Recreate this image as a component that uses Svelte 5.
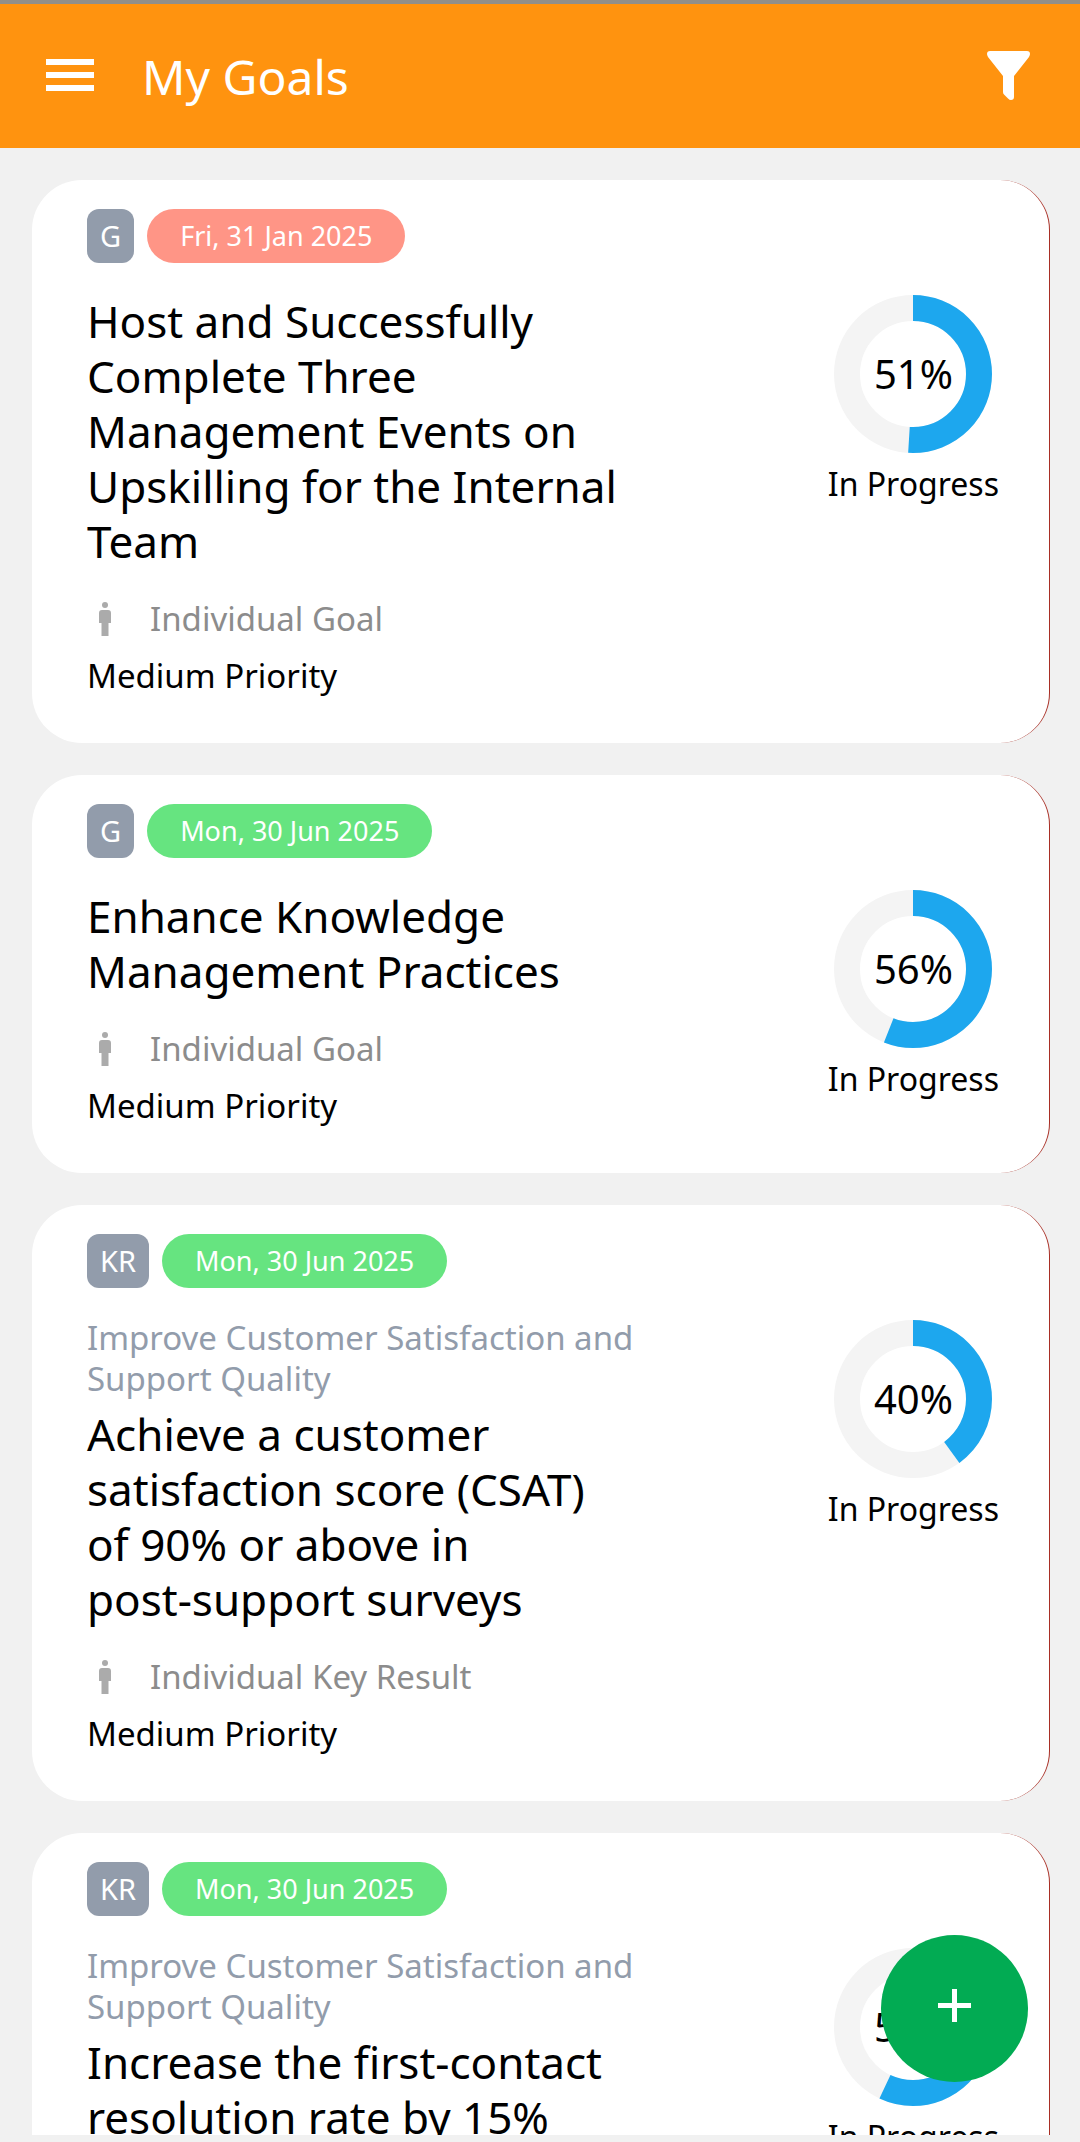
<script>
  let goals = [
    {
      id: 1,
      type: 'G',
      due: 'Fri, 31 Jan 2025',
      overdue: true,
      title: 'Host and Successfully\nComplete Three\nManagement Events on\nUpskilling for the Internal\nTeam',
      kind: 'Individual Goal',
      priority: 'Medium Priority',
      progress: 51,
      status: 'In Progress'
    },
    {
      id: 2,
      type: 'G',
      due: 'Mon, 30 Jun 2025',
      title: 'Enhance Knowledge\nManagement Practices',
      kind: 'Individual Goal',
      priority: 'Medium Priority',
      progress: 56,
      status: 'In Progress'
    },
    {
      id: 3,
      type: 'KR',
      due: 'Mon, 30 Jun 2025',
      parent: 'Improve Customer Satisfaction and\nSupport Quality',
      title: 'Achieve a customer\nsatisfaction score (CSAT)\nof 90% or above in\npost-support surveys',
      kind: 'Individual Key Result',
      priority: 'Medium Priority',
      progress: 40,
      status: 'In Progress'
    },
    {
      id: 4,
      type: 'KR',
      due: 'Mon, 30 Jun 2025',
      parent: 'Improve Customer Satisfaction and\nSupport Quality',
      title: 'Increase the first-contact\nresolution rate by 15%',
      kind: 'Individual Key Result',
      priority: 'Medium Priority',
      progress: 57,
      status: 'In Progress'
    }
  ];
</script>

<div class="screen">
  <header class="topbar">
    <button class="icon-btn" aria-label="Menu">
      <svg width="48" height="32" viewBox="0 0 48 32">
        <path d="M0 0h48v6H0zM0 13h48v6H0zM0 26h48v6H0z" fill="#fff" />
      </svg>
    </button>
    <h1>My Goals</h1>
    <button class="icon-btn filter" aria-label="Filter">
      <svg width="43" height="49" viewBox="0 0 43 49">
        <path
          d="M3 0h37q3 0 3 3 0 1-1 3L27 25v21q0 3-3 3-1.500 0-3-1.500l-4-4q-1-1-1-2.500V25L1 6Q0 4 0 3q0-3 3-3z"
          fill="#fff"
        />
      </svg>
    </button>
  </header>

  <main class="list">
    {#each goals as goal (goal.id)}
      <article class="card">
        <div class="info">
          <div class="chips">
            <span class="type">{goal.type}</span>
            <span class="due" class:overdue={goal.overdue}>{goal.due}</span>
          </div>
          {#if goal.parent}
            <p class="parent">{goal.parent}</p>
          {/if}
          <h2 class:child={goal.parent}>{goal.title}</h2>
          <p class="kind">
            <svg width="12" height="34" viewBox="0 0 12 34">
              <circle cx="6" cy="3" r="3" fill="#ababab" />
              <path d="M3 8h6q3 0 3 3v10H9.500v13h-7V21H0V11q0-3 3-3z" fill="#ababab" />
            </svg>
            {goal.kind}
          </p>
          <p class="priority">{goal.priority}</p>
        </div>
        <div class="progress">
          <div class="ring">
            <svg viewBox="0 0 158 158">
              <circle cx="79" cy="79" r="66" />
              <circle
                class="done"
                cx="79"
                cy="79"
                r="66"
                pathLength="100"
                stroke-dasharray="{goal.progress} 100"
                transform="rotate(-90 79 79)"
              />
            </svg>
            <span>{goal.progress}%</span>
          </div>
          <p>{goal.status}</p>
        </div>
      </article>
    {/each}
  </main>

  <button class="fab" aria-label="Add goal">
    <svg width="33" height="33" viewBox="0 0 33 33">
      <path d="M14 0h5v14h14v5H19v14h-5V19H0v-5h14z" fill="#fff" />
    </svg>
  </button>
</div>

<style>
  :global(body) {
    background: #f1f1f1;
  }
  .screen {
    height: 100vh;
    box-sizing: border-box;
    padding-bottom: 7px;
    display: flex;
    flex-direction: column;
    font-family: 'Noto Sans', Roboto, sans-serif;
    color: #000;
  }
  h1, h2, p {
    margin: 0;
    font-weight: 400;
  }
  button {
    border: none;
    padding: 0;
    cursor: pointer;
  }
  .topbar {
    flex: none;
    height: 148px;
    box-sizing: border-box;
    display: flex;
    align-items: center;
    padding: 0 50px 2px 46px;
    border-top: 4px solid #918f8a;
    background: #ff930f;
    color: #fff;
  }
  .icon-btn {
    display: flex;
    background: none;
  }
  .filter {
    margin-left: auto;
  }
  h1 {
    margin-left: 48px;
    padding-top: 4px;
    font-size: 48px;
    line-height: 64px;
  }
  .list {
    flex: 1;
    min-height: 0;
    overflow-y: auto;
    scrollbar-width: none;
    display: flex;
    flex-direction: column;
    gap: 32px;
    padding: 32px 30px 0 32px;
  }
  .card {
    flex: none;
    display: flex;
    justify-content: space-between;
    padding: 29px 50px 38px 55px;
    background: #fff;
    border-right: 1px solid #a82e24;
    border-radius: 50px;
  }
  .chips {
    display: flex;
    gap: 13px;
    line-height: 54px;
    color: #fff;
  }
  .type {
    padding: 0 13px;
    border-radius: 12px;
    background: #929cab;
    font-size: 29px;
  }
  .due {
    padding: 0 33px;
    border-radius: 27px;
    background: #66e480;
    font-size: 27px;
  }
  .due.overdue {
    background: #ff9586;
  }
  .parent {
    margin-top: 29px;
    font-size: 33px;
    line-height: 41px;
    color: #929cab;
    white-space: pre-line;
  }
  h2 {
    margin-top: 31px;
    font-size: 44px;
    line-height: 55px;
    white-space: pre-line;
  }
  h2.child {
    margin-top: 8px;
  }
  .kind {
    display: flex;
    align-items: center;
    gap: 39px;
    margin-top: 22px;
    padding-left: 12px;
    font-size: 33px;
    line-height: 56px;
    color: #8c8c8c;
  }
  .priority {
    font-size: 33px;
    line-height: 58px;
  }
  .progress {
    padding-top: 86px;
    text-align: center;
    font-size: 32px;
    line-height: 56px;
  }
  .ring {
    display: grid;
    place-items: center;
    width: 158px;
    margin: 0 auto 3px;
  }
  .ring svg,
  .ring span {
    grid-area: 1 / 1;
  }
  .ring svg {
    width: 158px;
    height: 158px;
  }
  .ring span {
    font-size: 40px;
  }
  .ring circle {
    fill: none;
    stroke: #f4f4f4;
    stroke-width: 26;
  }
  .ring .done {
    stroke: #1da7ee;
  }
  .fab {
    position: fixed;
    right: 52px;
    bottom: 60px;
    width: 147px;
    height: 147px;
    display: flex;
    align-items: center;
    justify-content: center;
    padding-bottom: 6px;
    border-radius: 50%;
    background: #02ab53;
  }
</style>
